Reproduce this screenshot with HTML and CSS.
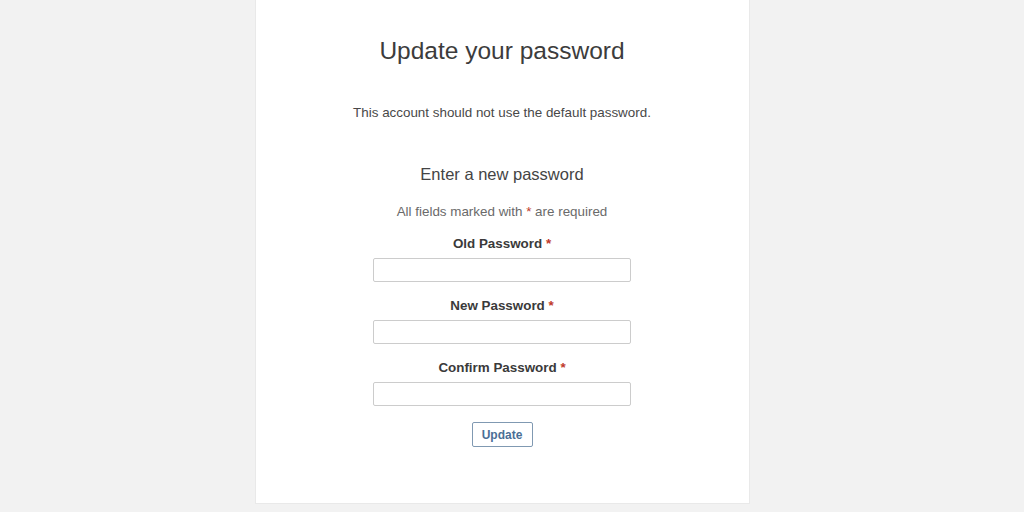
FILE: index.html
```html
<!DOCTYPE html>
<html lang="en">
<head>
  <meta charset="UTF-8">
  <meta name="viewport" content="width=device-width, initial-scale=1.0">
  <title>Update your password</title>
  <link rel="stylesheet" href="styles.css">
</head>
<body>
  <div class="page">
    <div class="card">
      <h1>Update your password</h1>
      <p class="intro">This account should not use the default password.</p>

      <form class="pw-form">
        <h2>Enter a new password</h2>
        <p class="note">All fields marked with <span class="req">*</span> are required</p>

        <label for="old-pw">Old Password <span class="req">*</span></label>
        <input type="password" id="old-pw">

        <label for="new-pw">New Password <span class="req">*</span></label>
        <input type="password" id="new-pw">

        <label for="confirm-pw">Confirm Password <span class="req">*</span></label>
        <input type="password" id="confirm-pw">

        <button type="button" class="btn">Update</button>
      </form>
    </div>
  </div>
</body>
</html>
```

FILE: styles.css
```css
body {
  font-family: "Liberation Sans", Arial, sans-serif;
  margin: 0;
  padding: 0;
  background-color: #f2f2f2;
  color: #444;
}
.page {
  padding-right: 20px;
  height: 512px;
}
.card {
  width: 495px;
  height: 504px;
  box-sizing: border-box;
  margin: 0 auto;
  padding-top: 36px;
  background: white;
  border: 1px solid #e9e9e9;
  border-top: none;
  text-align: center;
}
h1 {
  margin: 0;
  font-size: 24.5px;
  font-weight: normal;
  line-height: 30px;
  color: #3c3c3c;
}
.intro {
  margin: 38px 0 0;
  font-size: 13.4px;
  line-height: 18px;
  color: #484848;
}
.pw-form {
  display: flex;
  flex-direction: column;
  align-items: center;
}
h2 {
  margin: 41px 0 0;
  font-size: 16.5px;
  font-weight: normal;
  line-height: 22px;
  color: #444;
}
.note {
  margin: 18px 0 0;
  font-size: 13.4px;
  line-height: 18px;
  color: #6a6a6a;
}
.req {
  color: #c0392b;
}
label {
  margin-top: 15px;
  font-size: 13.4px;
  font-weight: bold;
  line-height: 18px;
  color: #3a3a3a;
}
.note + label {
  margin-top: 14px;
}
input {
  width: 258px;
  height: 24px;
  box-sizing: border-box;
  margin-top: 5px;
  border: 1px solid #ccc;
  border-radius: 2px;
  background: white;
}
.btn {
  margin-top: 16px;
  width: 61px;
  height: 25px;
  padding: 0;
  font-family: inherit;
  font-size: 12px;
  font-weight: bold;
  color: #4a6f96;
  background: white;
  border: 1px solid #8099b2;
  border-radius: 2px;
}
```
